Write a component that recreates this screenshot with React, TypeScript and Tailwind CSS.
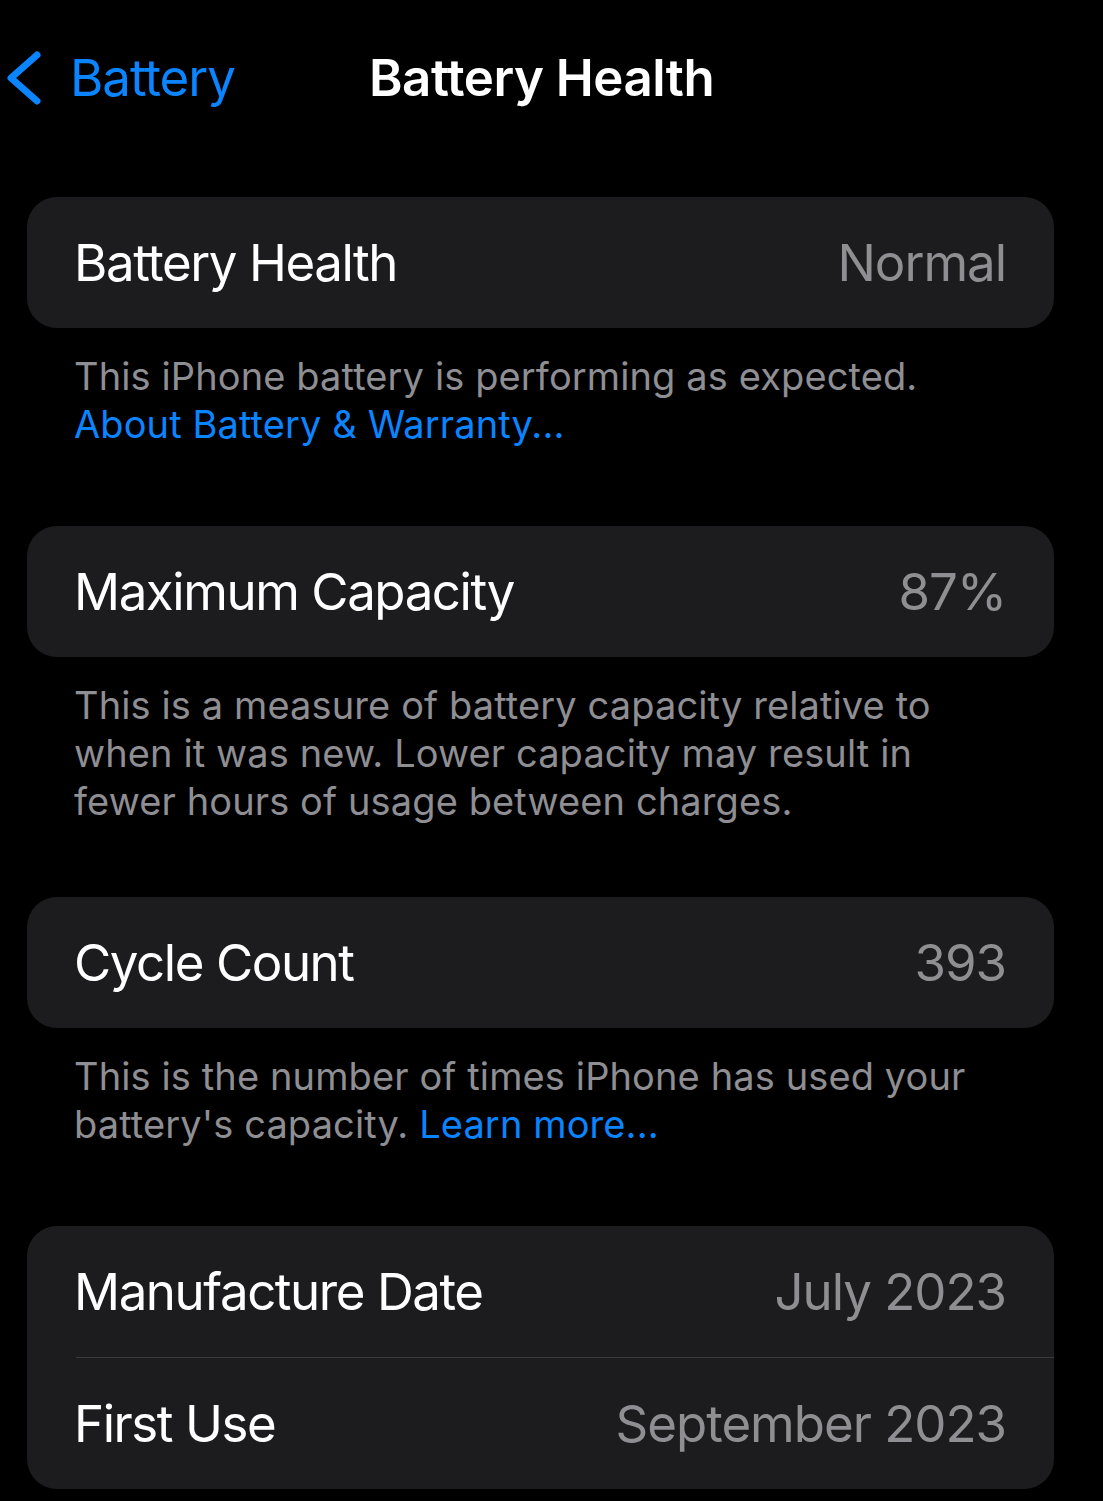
import React from 'react';

const font = { fontFamily: 'Inter, "Noto Sans", sans-serif' };

type RowProps = { label: string; value: string };

const Row: React.FC<RowProps> = ({ label, value }) => (
  <div className="flex h-[131px] items-center justify-between pl-[47px] pr-[48px]">
    <span className="text-[51px] leading-[60px] tracking-[-0.028em] text-white">{label}</span>
    <span className="text-[51px] leading-[60px] tracking-[-0.02em] text-[#8e8e93]">{value}</span>
  </div>
);

const Card: React.FC<{ children: React.ReactNode }> = ({ children }) => (
  <div className="overflow-hidden rounded-[30px] bg-[#1c1c1e]">{children}</div>
);

const Footer: React.FC<{ children: React.ReactNode; className?: string }> = ({ children, className }) => (
  <div className={`pl-[47px] text-[38px] leading-[48px] tracking-[0.003em] text-[#8e8e93] ${className ?? ''}`}>
    {children}
  </div>
);

export default function App() {
  return (
    <div className="min-h-[1501px] w-[1103px] bg-black" style={font}>
      <header className="flex items-center pl-[6px] pt-[48px]">
        <div className="flex w-[363px] shrink-0 items-center">
          <svg width="36" height="56" viewBox="0 0 36 56" fill="none">
            <polyline
              points="31,5 5,28 31,51"
              stroke="#0a84ff"
              strokeWidth="7"
              strokeLinecap="round"
              strokeLinejoin="round"
            />
          </svg>
          <span className="ml-[28px] text-[51px] leading-[60px] tracking-[-0.02em] text-[#0a84ff]">Battery</span>
        </div>
        <h1 className="text-[51px] font-semibold leading-[60px] tracking-[-0.01em] text-white">Battery Health</h1>
      </header>

      <main className="pl-[27px] pr-[49px] pt-[89px]">
        <Card>
          <Row label="Battery Health" value="Normal" />
        </Card>
        <Footer className="mt-[24px] mb-[78px]">
          <div>This iPhone battery is performing as expected.</div>
          <div className="text-[#0a84ff]">About Battery &amp; Warranty...</div>
        </Footer>

        <Card>
          <Row label="Maximum Capacity" value="87%" />
        </Card>
        <Footer className="mt-[24px] mb-[72px]">
          <div>This is a measure of battery capacity relative to</div>
          <div>when it was new. Lower capacity may result in</div>
          <div>fewer hours of usage between charges.</div>
        </Footer>

        <Card>
          <Row label="Cycle Count" value="393" />
        </Card>
        <Footer className="mt-[24px] mb-[78px]">
          <div>This is the number of times iPhone has used your</div>
          <div>
            battery's capacity. <span className="text-[#0a84ff]">Learn more...</span>
          </div>
        </Footer>

        <Card>
          <Row label="Manufacture Date" value="July 2023" />
          <div className="ml-[49px] h-px bg-[#3a3a3c]" />
          <Row label="First Use" value="September 2023" />
        </Card>
      </main>
    </div>
  );
}
